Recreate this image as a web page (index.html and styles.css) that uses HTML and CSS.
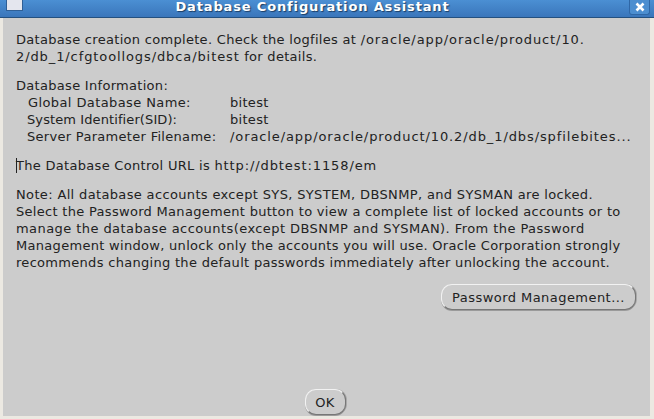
FILE: index.html
```html
<!DOCTYPE html>
<html lang="en">
<head>
    <meta charset="UTF-8">
    <title>Database Configuration Assistant</title>
    <link rel="stylesheet" href="styles.css">
</head>
<body>

<div class="window">
    <div class="titlebar">
        <span class="win-menu"></span>
        <span class="win-title">Database Configuration Assistant</span>
        <span class="win-close">
            <svg width="10" height="10" viewBox="0 0 10 10"><path d="M1.5 1.5L8.5 8.5M8.5 1.5L1.5 8.5" stroke="#fff" stroke-width="2.6"/></svg>
        </span>
    </div>

    <div class="content">
        <p class="msg">Database creation complete. Check the logfiles at <span class="path">/oracle/app/oracle/product/10.</span><br><span class="path">2/db_1/cfgtoollogs/dbca/bitest</span> for details.</p>

        <div class="info">
            <div class="info-head">Database Information:</div>
            <div class="info-row name-row"><span class="info-label">Global Database Name:</span><span>bitest</span></div>
            <div class="info-row"><span class="info-label sid-label">System Identifier(SID):</span><span>bitest</span></div>
            <div class="info-row"><span class="info-label">Server Parameter Filename:</span><span class="path">/oracle/app/oracle/product/10.2/db_1/dbs/spfilebites...</span></div>
        </div>

        <p class="msg url"><span class="caret"></span>The Database Control URL is <span class="path">http://dbtest:1158/em</span></p>

        <p class="msg note"><span class="caps">Note: All database accounts except SYS, SYSTEM, DBSNMP, and SYSMAN are locked.</span><br>Select the Password Management button to view a complete list of locked accounts or to<br><span class="caps-wide">manage the database accounts(except DBSNMP and SYSMAN). From the Password</span><br>Management window, unlock only the accounts you will use. Oracle Corporation strongly<br>recommends changing the default passwords immediately after unlocking the account.</p>

        <div class="pw-row">
            <button class="btn pw-btn">Password Management...</button>
        </div>

        <div class="ok-row">
            <button class="btn ok-btn">OK</button>
        </div>
    </div>
</div>

</body>
</html>
```

FILE: styles.css
```css
* {
    margin: 0;
    padding: 0;
    box-sizing: border-box;
}

html, body {
    width: 654px;
    height: 419px;
    overflow: hidden;
}

body {
    font-family: "DejaVu Sans", sans-serif;
    font-size: 13px;
    letter-spacing: 0.3px;
    color: #222;
    background-color: #ece9e2;
}

.window {
    display: flex;
    flex-direction: column;
    height: 416px;
}

.titlebar {
    flex: none;
    height: 18px;
    display: flex;
    align-items: flex-start;
    justify-content: space-between;
    padding: 0 4px 0 6px;
    background: linear-gradient(#4b8fd3, #3a76bb);
    border-bottom: 1px solid #24507f;
}

.win-menu {
    width: 17px;
    height: 11px;
    background-color: #e4e6ee;
    border: 1px solid #2f5f96;
    border-top: none;
}

.win-title {
    margin-top: -2px;
    margin-right: 27px;
    font-weight: bold;
    font-size: 13px;
    line-height: 17px;
    letter-spacing: 0.85px;
    color: #fff;
    text-shadow: 1px 1px 1px #1c3d63;
}

.win-close {
    width: 21px;
    height: 15px;
    display: flex;
    align-items: center;
    justify-content: center;
    border: 1px solid #2f67a6;
    border-top: none;
    border-radius: 0 0 3px 3px;
    background-color: #4c8ed0;
}

.content {
    flex: 1;
    display: flex;
    flex-direction: column;
    margin: 0 4px 0 3px;
    padding: 13px 0 0 13px;
    background-color: #cccccc;
    line-height: 17px;
}

.msg {
    white-space: nowrap;
}

.path {
    letter-spacing: 0.9px;
}

.info {
    margin-top: 12px;
}

.info-row {
    display: grid;
    grid-template-columns: 203px auto;
    padding-left: 11px;
    white-space: nowrap;
}

.name-row {
    grid-template-columns: 202px auto;
    padding-left: 12px;
}

.name-row .info-label {
    letter-spacing: 0.4px;
}

.sid-label {
    letter-spacing: 0.1px;
}

.url {
    margin-top: 12px;
    position: relative;
}

.caret {
    position: absolute;
    left: 0;
    top: 1px;
    width: 1px;
    height: 15px;
    background-color: #222;
}

.note {
    margin-top: 12px;
}

.caps {
    letter-spacing: 0.35px;
}

.caps-wide {
    letter-spacing: 0.43px;
}

.pw-row {
    display: flex;
    justify-content: flex-end;
    margin-top: 13px;
    padding-right: 14px;
}

.btn {
    font-family: "DejaVu Sans", sans-serif;
    font-size: 13px;
    letter-spacing: 0.45px;
    color: #222;
    background-color: #cccccc;
    border: 1px solid #f2f2f2;
    border-right-color: #777;
    border-bottom-color: #777;
    border-radius: 11px;
    box-shadow: 0 1px 0 #9a9a9a, 1px 0 0 #a8a8a8;
}

.pw-btn {
    width: 195px;
    height: 26px;
}

.ok-row {
    display: flex;
    justify-content: center;
    margin-top: auto;
    padding-right: 16px;
    padding-bottom: 1px;
}

.ok-btn {
    width: 41px;
    height: 26px;
}
```
